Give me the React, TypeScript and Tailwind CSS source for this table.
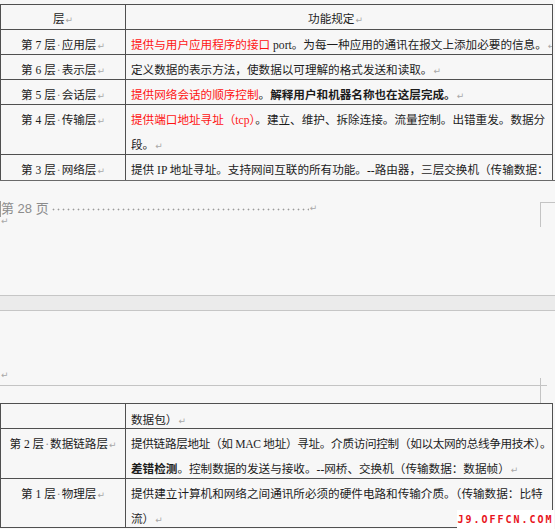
import React from 'react';

// Word-style formatting marks
const Ret = () => <span className="ml-px text-[9px] text-[#a8a8a8] font-['DejaVu_Sans',sans-serif]">↵</span>;
const Dot = () => <span className="mx-px text-[#8a8a8a]">·</span>;
const Red = ({ children }: { children: React.ReactNode }) => <span className="text-[#ff1414]">{children}</span>;

const line = 'border-[#505050]';

interface RowProps {
  label?: React.ReactNode;
  lines: React.ReactNode[];
  h: string;
  top?: boolean;
  bottom?: boolean;
  pt?: string;
}

const Row = ({ label, lines, h, top, bottom = true, pt = 'pt-[3px]' }: RowProps) => (
  <div className={`flex ${h} ${top ? 'border-t' : ''} ${bottom ? 'border-b' : ''} ${line}`}>
    <div className={`w-[125px] shrink-0 border-r ${line} ${pt} text-center leading-[25px] whitespace-nowrap overflow-hidden`}>
      {label}
    </div>
    <div className={`flex-1 min-w-0 pl-[5px] ${pt} leading-[25px] whitespace-nowrap overflow-hidden`}>
      {lines.map((l, i) => (
        <div key={i}>{l}</div>
      ))}
    </div>
  </div>
);

const Label = ({ n, name }: { n: string; name: string }) => (
  <>
    第 {n} 层<Dot />{name}<Ret />
  </>
);

export default function App() {
  return (
    <div className="relative w-[555px] h-[529px] overflow-hidden bg-[#f7f7f7] text-[11.6px] text-[#1c1c1c] font-['Liberation_Serif','Noto_Sans_CJK_SC',serif]">
      {/* page 28: end of the table */}
      <div className="pt-[4px]">
        <div className={`w-[553px] border-l border-r ${line}`}>
          <Row
            h="h-[26px]"
            top
            pt="pt-[2px]"
            label={<>层<Ret /></>}
            lines={[<div className="text-center pr-[12px]">功能规定<Ret /></div>]}
          />
          <Row
            h="h-[25px]"
            label={<Label n="7" name="应用层" />}
            lines={[<><Red>提供与用户应用程序的接口</Red> port。为每一种应用的通讯在报文上添加必要的信息。<Ret /></>]}
          />
          <Row
            h="h-[25px]"
            label={<Label n="6" name="表示层" />}
            lines={[<>定义数据的表示方法，使数据以可理解的格式发送和读取。<Ret /></>]}
          />
          <Row
            h="h-[25px]"
            label={<Label n="5" name="会话层" />}
            lines={[<><Red>提供网络会话的顺序控制</Red>。<b>解释用户和机器名称也在这层完成。</b><Ret /></>]}
          />
          <Row
            h="h-[50px]"
            label={<Label n="4" name="传输层" />}
            lines={[
              <><Red>提供端口地址寻址（tcp）</Red>。建立、维护、拆除连接。流量控制。出错重发。数据分</>,
              <>段。<Ret /></>,
            ]}
          />
          <Row
            h="h-[25px]"
            bottom={false}
            label={<Label n="3" name="网络层" />}
            lines={[<>提供 IP 地址寻址。支持网间互联的所有功能。--路由器，三层交换机（传输数据：</>]}
          />
        </div>
      </div>

      {/* page edge */}
      <div className="h-px bg-[#6a6a6a]" />

      {/* footer of page 28 */}
      <div className="relative h-[114px]">
        <div className="pt-[20px] flex items-center h-[36px] text-[13px] text-[#8c8c8c] font-['Liberation_Sans','Noto_Sans_CJK_SC',sans-serif]">
          <span className="border-l border-[#9a9a9a] leading-[16px]">第 28 页</span>
          <span className="ml-[2px] w-[258px] h-[3px] bg-[radial-gradient(circle,#9a9a9a_0.8px,transparent_1.1px)] bg-[length:5px_3px]" />
          <Ret />
        </div>
        <div className="leading-[12px] -mt-[2px]"><Ret /></div>
        <div className="absolute left-[540px] top-[21px] w-[15px] h-[25px] border-l border-t border-[#c4c4c4]" />
      </div>

      {/* gap between pages */}
      <div className="h-[16px] border-y border-[#c6c6c6] bg-[#ebebeb]" />

      {/* header of page 29 */}
      <div className="relative h-[92px] flex flex-col">
        <div className="h-[58px]" />
        <div className="h-[16px] leading-[12px]"><Ret /></div>
        <div className="h-px w-[547px] bg-[#c4c4c4]" />
        <div className="absolute left-[540px] top-[67px] w-px h-[25px] bg-[#c4c4c4]" />
      </div>

      {/* page 29: rest of the table */}
      <div className={`w-[553px] border-l border-r ${line}`}>
        <Row h="h-[26px]" top pt="pt-[4px]" label={null} lines={[<>数据包）<Ret /></>]} />
        <Row
          h="h-[50px]"
          label={<Label n="2" name="数据链路层" />}
          lines={[
            <span className="tracking-[-0.3px]">提供链路层地址（如 MAC 地址）寻址。介质访问控制（如以太网的总线争用技术）。</span>,
            <><b>差错检测</b>。控制数据的发送与接收。--网桥、交换机（传输数据：数据帧）<Ret /></>,
          ]}
        />
        <Row
          h="h-[49px]"
          label={<Label n="1" name="物理层" />}
          lines={[
            <>提供建立计算机和网络之间通讯所必须的硬件电路和传输介质。（传输数据：比特</>,
            <>流）<Ret /></>,
          ]}
        />
      </div>

      {/* site watermark */}
      <div className="absolute left-[457px] top-[510px] w-[97px] h-[19px] bg-white flex items-center justify-center">
        <span className="text-[10px] font-bold tracking-[2px] text-[#e8141c] font-['DejaVu_Sans_Mono',monospace] scale-y-[1.1]">
          J9.OFFCN.COM
        </span>
      </div>
    </div>
  );
}
